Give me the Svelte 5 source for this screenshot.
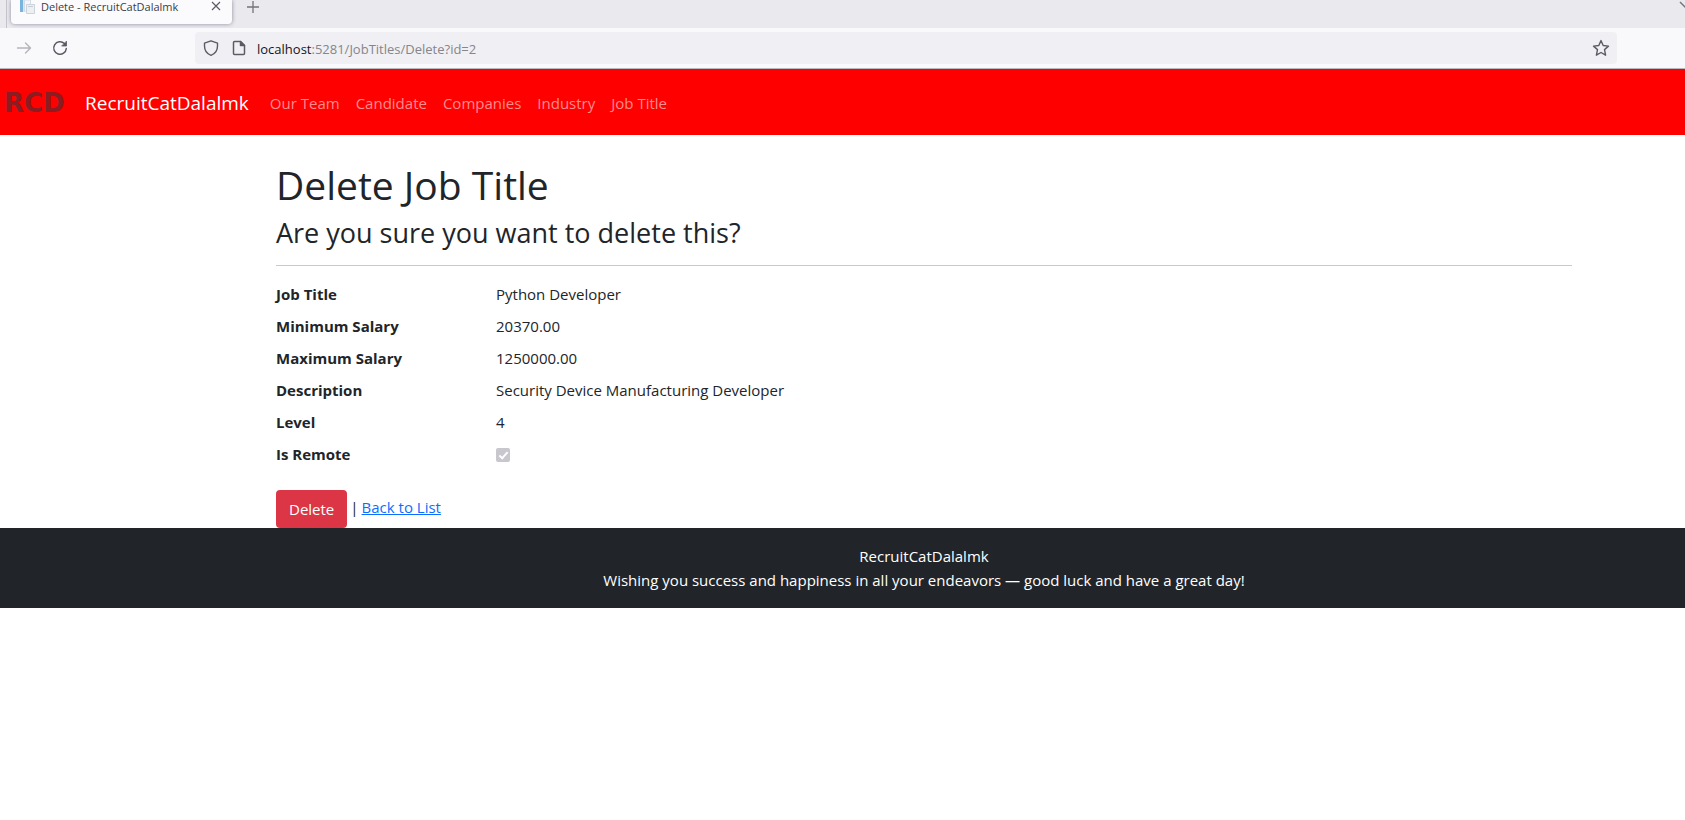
<script>
  const links = ['Our Team', 'Candidate', 'Companies', 'Industry', 'Job Title'];
  const fields = [
    ['Job Title', 'Python Developer'],
    ['Minimum Salary', '20370.00'],
    ['Maximum Salary', '1250000.00'],
    ['Description', 'Security Device Manufacturing Developer'],
    ['Level', '4']
  ];
</script>

<div class="tabs">
  <div class="edge"></div>
  <div class="tab">
    <svg class="favicon" width="16" height="14" viewBox="0 0 16 14" aria-hidden="true">
      <path d="M1 0h5v12H1z" fill="#d5e8f6" />
      <path d="M1 0h3v12H1z" fill="#78b4de" />
      <path d="M5.500 0h6v11h-6z" fill="#f4f6f8" stroke="#d3dce4" />
      <path d="M7.500 4.500h8v9h-8z" fill="#edf0f3" stroke="#ccd3da" />
      <path d="M9 6.500h5" stroke="#c4ccd4" />
    </svg>
    <span class="tab-title">Delete - RecruitCatDalalmk</span>
    <button class="icon" aria-label="Close tab">
      <svg width="14" height="14" viewBox="0 0 14 14"><path d="M3 2l8 8M11 2l-8 8" stroke="#5b5b66" stroke-width="1.2" /></svg>
    </button>
  </div>
  <button class="icon add" aria-label="New tab">
    <svg width="14" height="14" viewBox="0 0 14 14"><path d="M7 1v12M1 7h12" stroke="#73737b" stroke-width="1.3" /></svg>
  </button>
  <button class="icon all" aria-label="List all tabs">
    <svg width="6" height="10" viewBox="0 0 6 10"><path d="M1 2l6 6" stroke="#73737b" stroke-width="1.4" /></svg>
  </button>
</div>

<div class="toolbar">
  <button class="icon" aria-label="Forward">
    <svg width="16" height="16" viewBox="0 0 16 16" fill="none" stroke="#b4b4ba" stroke-width="1.4" stroke-linecap="round" stroke-linejoin="round"><path d="M1.500 8h13M9.500 3l5 5-5 5" /></svg>
  </button>
  <button class="icon reload" aria-label="Reload">
    <svg width="16" height="16" viewBox="0 0 16 16" fill="none" stroke="#5b5b66" stroke-width="1.5" stroke-linecap="round"><path d="M14.300 8.500A6.300 6.300 0 1 1 12.400 3.500" /><path d="M14.500 1.500v4.500H10z" fill="#5b5b66" stroke-width=".8" stroke-linejoin="round" /></svg>
  </button>
  <div class="address">
    <svg width="16" height="16" viewBox="0 0 16 16" fill="none" stroke="#5b5b66" stroke-width="1.4" stroke-linejoin="round"><path d="M8 .8l6.500 2.300v3C14.500 10.500 12 14 8 15.300 4 14 1.500 10.500 1.500 6.100v-3z" /></svg>
    <svg class="page-icon" width="16" height="16" viewBox="0 0 16 16" fill="none" stroke="#5b5b66" stroke-width="1.5" stroke-linejoin="round"><path d="M3.500 1.500h6L13.500 5.500v8q0 1-1 1h-9q-1 0-1-1v-11q0-1 1-1z" /><path d="M9.500 1.500v4h4z" fill="#5b5b66" /></svg>
    <span class="url"><b>localhost</b>:5281/JobTitles/Delete?id=2</span>
    <button class="icon" aria-label="Bookmark this page">
      <svg width="18" height="18" viewBox="0 0 18 18" fill="none" stroke="#5b5b66" stroke-width="1.4" stroke-linejoin="round"><path d="M9 1.600l2.200 4.900 5.300.6-4 3.500 1.100 5.600L9 13.500l-4.600 2.700 1.100-5.600-4-3.500 5.300-.6z" /></svg>
    </button>
  </div>
</div>

<nav>
  <a class="logo" href="#home">RCD</a>
  <a class="brand" href="#home">RecruitCatDalalmk</a>
  <ul>
    {#each links as link}
      <li><a href="#{link.replace(' ', '')}">{link}</a></li>
    {/each}
  </ul>
</nav>

<div class="shell">
  <main>
    <h1>Delete Job Title</h1>
    <h2>Are you sure you want to delete this?</h2>
    <hr />
    <dl>
      {#each fields as [name, value]}
        <dt>{name}</dt>
        <dd>{value}</dd>
      {/each}
      <dt><label for="remote">Is Remote</label></dt>
      <dd class="check"><input id="remote" type="checkbox" checked disabled /></dd>
    </dl>
    <form onsubmit={(e) => e.preventDefault()}>
      <button class="delete" type="submit">Delete</button>
      <span>|</span>
      <a href="#list">Back to List</a>
    </form>
  </main>
</div>

<footer>
  <div>RecruitCatDalalmk</div>
  <div>Wishing you success and happiness in all your endeavors — good luck and have a great day!</div>
</footer>

<style>
  :global(body) {
    background: #fff;
    color: #212529;
    font: 15px/24px "Segoe UI", "Open Sans", "Noto Sans", sans-serif;
  }
  .icon {
    display: flex;
    padding: 0;
    border: 0;
    background: none;
  }
  .tabs {
    display: flex;
    align-items: flex-start;
    height: 28px;
    background: #eae9ee;
    overflow: hidden;
  }
  .edge {
    width: 1px;
    height: 28px;
    margin-left: 6px;
    background: #c3c3c9;
  }
  .tab {
    box-sizing: border-box;
    display: flex;
    width: 221px;
    height: 24px;
    margin-left: 4px;
    padding: 0 9px 0 8px;
    border-radius: 0 0 4px 4px;
    background: #fbfbfe;
    box-shadow: 0 0 4px #8c8c98;
  }
  .tab-title {
    flex: 1;
    margin-left: 6px;
    color: #3c3b46;
    font-size: 11px;
    line-height: 14px;
    white-space: nowrap;
  }
  .add {
    margin-left: 14px;
  }
  .all {
    margin-left: auto;
  }
  .toolbar {
    display: flex;
    align-items: center;
    height: 40px;
    padding: 0 68px 0 16px;
    border-bottom: 1px solid #b8b8bf;
    background: #f9f9fb;
  }
  .reload {
    margin-left: 20px;
  }
  .address {
    display: flex;
    flex: 1;
    align-items: center;
    height: 32px;
    margin-left: 127px;
    padding: 0 7px 0 8px;
    border-radius: 4px;
    background: #f0f0f4;
  }
  .page-icon {
    margin-left: 12px;
  }
  .url {
    flex: 1;
    margin-left: 10px;
    padding-top: 2px;
    color: #85858c;
    font-size: 13px;
  }
  .url b {
    color: #15141a;
    font-weight: 400;
  }
  nav {
    box-sizing: border-box;
    display: flex;
    align-items: center;
    height: 66px;
    padding: 2px 4px 0;
    background: #f00;
  }
  nav a {
    text-decoration: none;
  }
  .logo {
    width: 65px;
    color: #8a1d22;
    font: bold 26px/24px "DejaVu Sans", sans-serif;
  }
  .brand {
    margin-left: 16px;
    color: #fff;
    font-size: 19px;
    line-height: 30px;
  }
  ul {
    display: flex;
    gap: 16px;
    margin: 0 0 0 21px;
    padding: 0;
    list-style: none;
  }
  li a {
    color: #ff8c8c;
  }
  .shell {
    padding: 26px 0 0 163px;
  }
  main {
    box-sizing: border-box;
    max-width: 1320px;
    margin: 0 101px;
    padding: 0 12px;
  }
  h1,
  h2 {
    margin: 0;
    font-weight: 400;
  }
  h1 {
    margin-bottom: 7px;
    font-size: 39px;
    line-height: 48px;
  }
  h2 {
    margin-bottom: 15px;
    font-size: 27px;
    line-height: 34px;
  }
  hr {
    height: 1px;
    margin: 0 0 16px;
    border: 0;
    background: #c8c9ca;
  }
  dl {
    display: grid;
    grid-template-columns: 1fr 5fr;
    row-gap: 8px;
    margin: 0 -24px 24px 0;
  }
  dt {
    font-weight: 700;
  }
  dd {
    margin: 0;
  }
  .check {
    display: flex;
    align-items: center;
    padding-top: 2px;
    line-height: 22px;
  }
  input {
    display: grid;
    place-items: center;
    width: 14px;
    height: 14px;
    margin: 0;
    border-radius: 2px;
    background: #c7c7ce;
    appearance: none;
  }
  input::after {
    width: 3px;
    height: 7px;
    margin-bottom: 2px;
    border: solid #fff;
    border-width: 0 2px 2px 0;
    content: "";
    transform: rotate(42deg);
  }
  form {
    display: flex;
    gap: 3px;
    line-height: 34px;
  }
  form a {
    color: #0d6efd;
  }
  .delete {
    height: 38px;
    padding: 0 13px;
    border: 0;
    border-radius: 4px;
    background: #dc3545;
    color: #fff;
    font: inherit;
  }
  footer {
    padding: 16px 0 16px 163px;
    background: #212529;
    color: #fff;
    text-align: center;
  }
</style>
